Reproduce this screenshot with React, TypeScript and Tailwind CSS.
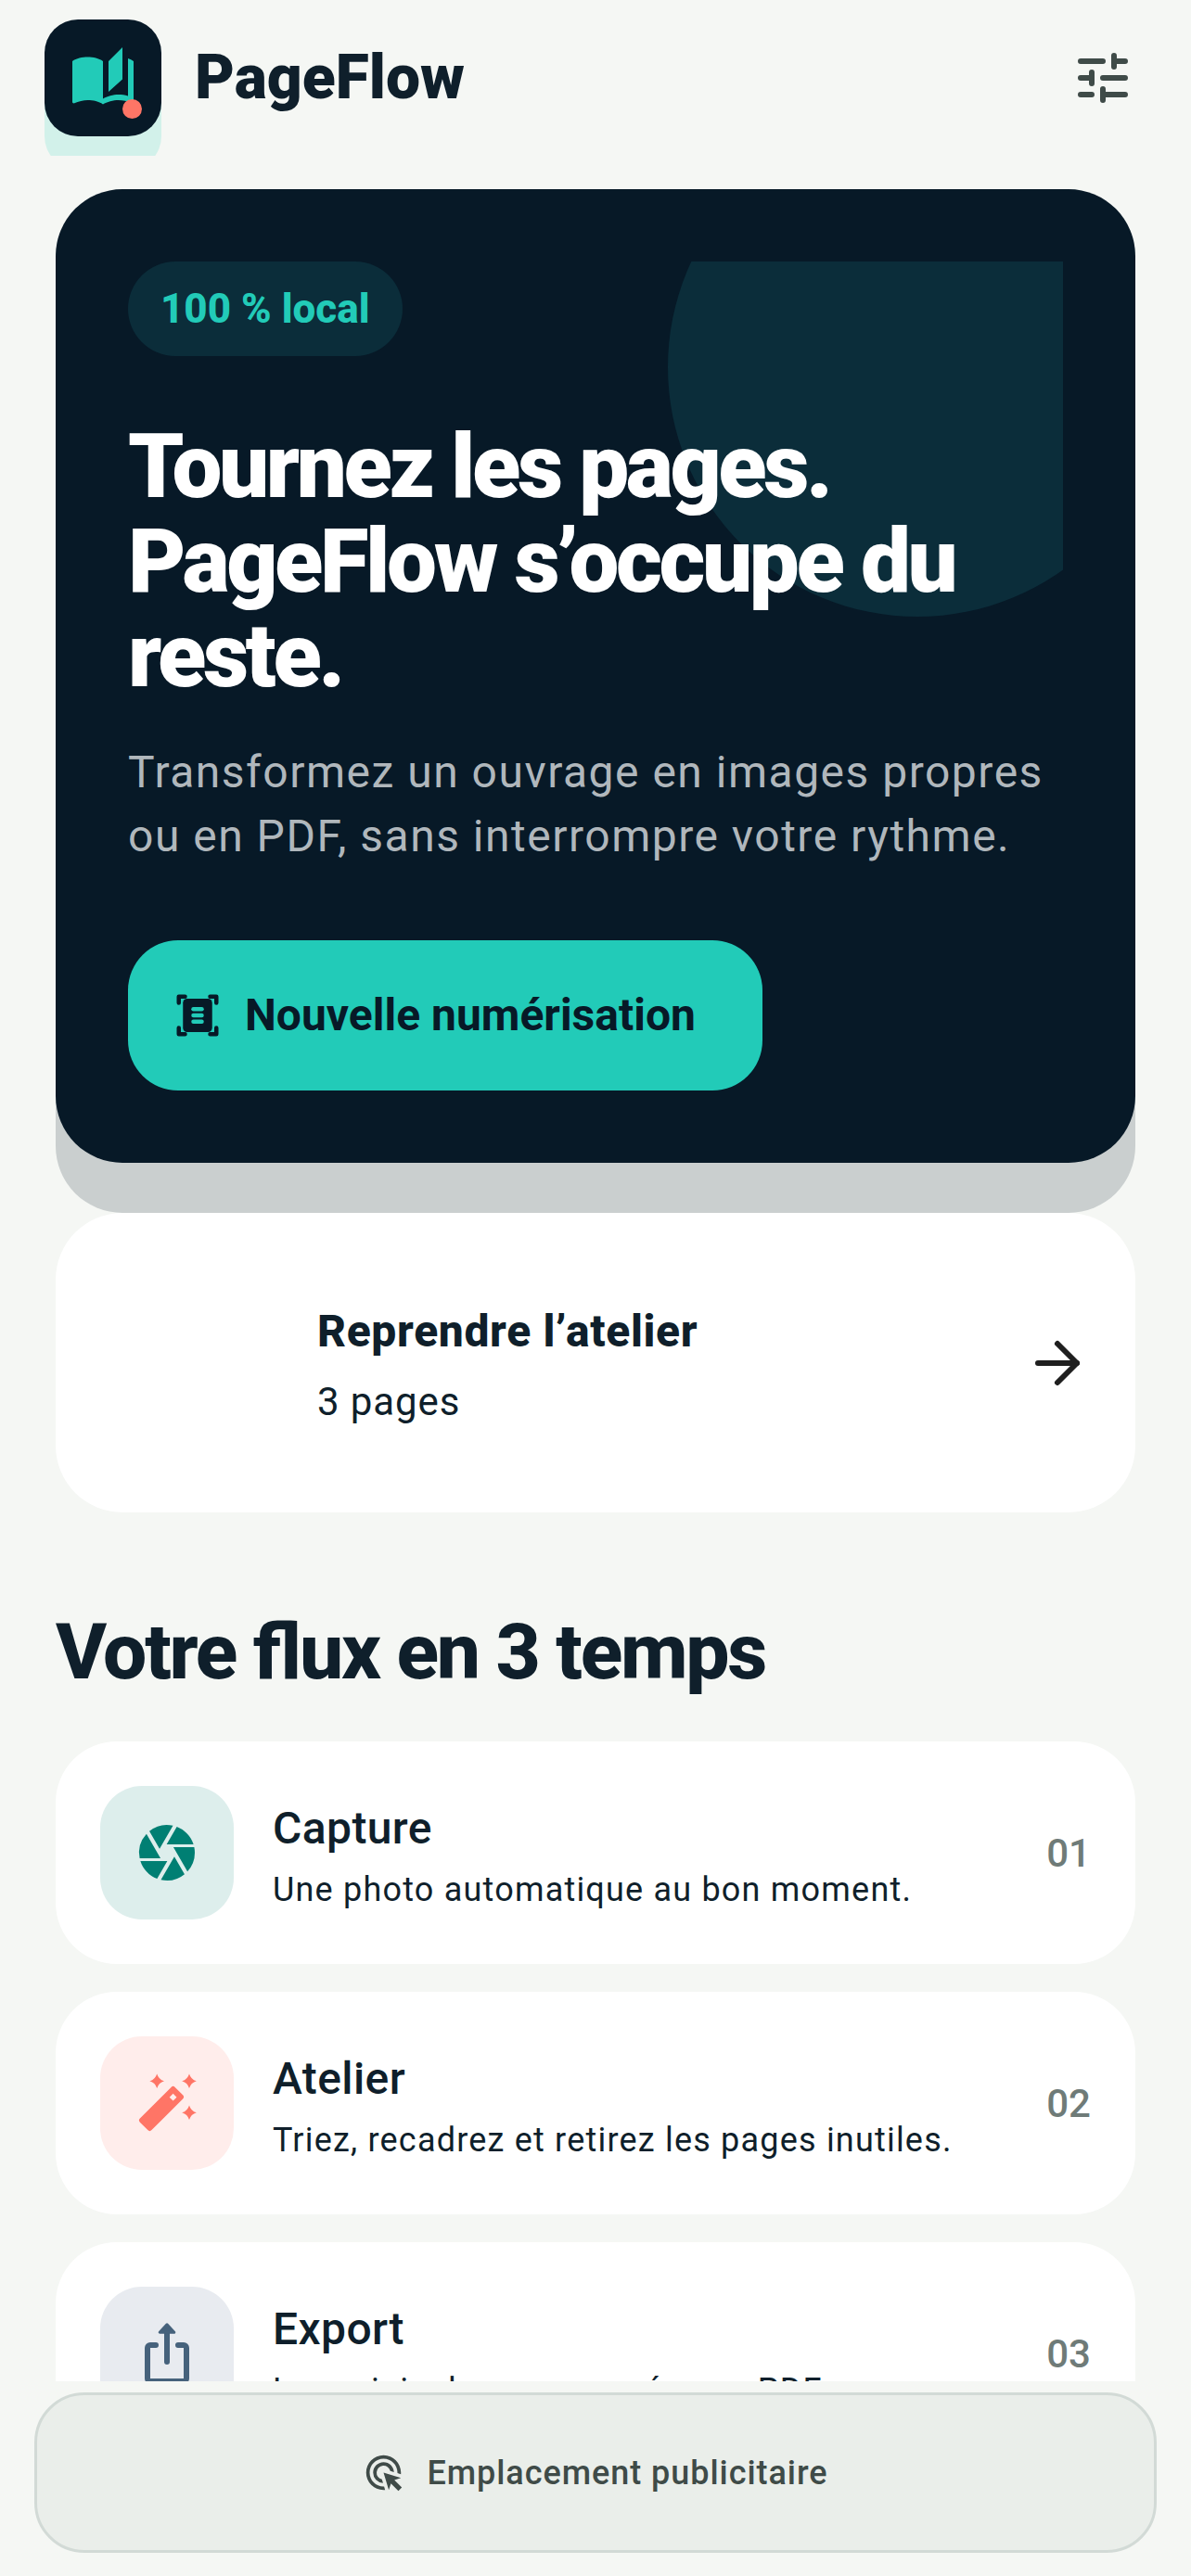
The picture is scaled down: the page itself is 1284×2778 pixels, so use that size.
import { ArrowRight } from 'lucide-react'
import { MdAdsClick, MdAutoStories, MdCamera } from 'react-icons/md'

function TuneIcon() {
  return (
    <svg width="72" height="72" viewBox="0 0 24 24" fill="none" stroke="#3f4b48" strokeWidth="2" strokeLinecap="round">
      <path d="M4 6h8M16 4v4M16 6h4M4 12h4M8 10v4M12 12h8M4 18h4M12 16v4M12 18h8" />
    </svg>
  )
}

function ScanIcon() {
  return (
    <svg width="54" height="54" viewBox="0 0 24 24" className="shrink-0">
      <path d="M6 3H3v3M18 3h3v3M6 21H3v-3M18 21h3v-3" fill="none" stroke="#071927" strokeWidth="2" strokeLinecap="round" strokeLinejoin="round" />
      <rect x="5" y="4" width="14" height="16" rx="2" fill="#071927" />
      <rect x="9" y="8" width="6" height="2" rx="1" fill="#22cbb8" />
      <rect x="9" y="11" width="6" height="2" rx="1" fill="#22cbb8" />
      <rect x="9" y="14" width="6" height="2" rx="1" fill="#22cbb8" />
    </svg>
  )
}

function WandIcon() {
  const sparkle = 'm0-2.6q.6 2 2.6 2.6q-2 .6-2.6 2.6q-.6-2-2.6-2.6q2-.6 2.6-2.6z'
  return (
    <svg width="72" height="72" viewBox="0 0 24 24" fill="#ff7566">
      <path d={`M8.4 4.1${sparkle}M20 4.1${sparkle}M20 15.4${sparkle}`} />
      <path
        fillRule="evenodd"
        d="M13.5 6.3a1 1 0 0 1 1.4 0l2.8 2.8a1 1 0 0 1 0 1.4L6.5 21.7a1 1 0 0 1-1.4 0l-2.8-2.8a1 1 0 0 1 0-1.4zM14.2 8.6l-1.3 1.3 1.3 1.3 1.3-1.3z"
      />
    </svg>
  )
}

function ShareIcon() {
  return (
    <svg width="72" height="72" viewBox="0 0 24 24" fill="none" stroke="#46627c" strokeWidth="2" strokeLinecap="round" strokeLinejoin="round">
      <path d="M8 9H6a1 1 0 0 0-1 1v11a1 1 0 0 0 1 1h12a1 1 0 0 0 1-1V10a1 1 0 0 0-1-1h-2M12 4v11" />
      <path d="M12 1.6 9.4 4.4h5.2z" fill="#46627c" strokeWidth="1" />
    </svg>
  )
}

const steps = [
  { icon: <MdCamera size={72} color="#007f73" />, tile: 'bg-[#ddeeec]', title: 'Capture', desc: 'Une photo automatique au bon moment.', num: '01' },
  { icon: <WandIcon />, tile: 'bg-[#ffedeb]', title: 'Atelier', desc: 'Triez, recadrez et retirez les pages inutiles.', num: '02' },
  { icon: <ShareIcon />, tile: 'bg-[#e8ebf0]', title: 'Export', desc: 'Les originales ou groupées en PDF.', num: '03' },
]

export default function App() {
  return (
    <div className="h-[2778px] flex flex-col bg-[#f5f7f4] text-[#0f1f2b] [font-family:Roboto,sans-serif] overflow-hidden">
      <header className="h-[168px] shrink-0 overflow-hidden pl-12 pr-[59px] pt-[21px]">
        <div className="flex items-center justify-between h-[126px]">
          <div className="flex items-center gap-9">
            <div className="relative w-[126px] h-[126px] rounded-[36px] bg-[#071927] shadow-[0_36px_0_#d2f1ea] flex items-center justify-center">
              <MdAutoStories size={72} color="#22cbb8" />
              <div className="absolute left-[84px] top-[86px] w-[21px] h-[21px] rounded-full bg-[#ff7566]" />
            </div>
            <span className="text-[66px] leading-none font-black">PageFlow</span>
          </div>
          <TuneIcon />
        </div>
      </header>

      <main className="flex-1 min-h-0 overflow-hidden px-[60px] pt-9">
        <section className="relative rounded-[72px] bg-[#071927] p-[78px] shadow-[0_54px_0_#cacfcf]">
          <div className="absolute left-[78px] right-[78px] top-[78px] bottom-[78px] overflow-hidden">
            <div className="absolute left-[582px] -top-[155px] w-[538px] h-[538px] rounded-full bg-[#0b2d3a]" />
          </div>
          <div className="relative">
            <div className="w-fit h-[102px] flex items-center px-[35px] rounded-full bg-[#0b2d3a] text-[#22cbb8] text-[44px] font-extrabold">
              100 % local
            </div>
            <h1 className="mt-[68px] text-[96px] leading-[102px] font-black tracking-[-3.4px] text-white">
              Tournez les pages. PageFlow s’occupe du reste.
            </h1>
            <p className="mt-10 text-[48px] leading-[69px] tracking-[1.5px] text-[#b0b7bc]">
              Transformez un ouvrage en images propres ou en PDF, sans interrompre votre rythme.
            </p>
            <button className="mt-[78px] h-[162px] w-fit flex items-center gap-6 pl-12 pr-[72px] rounded-[54px] bg-[#22cbb8] text-[#071927] text-[48px] font-bold">
              <ScanIcon />
              Nouvelle numérisation
            </button>
          </div>
        </section>

        <section className="mt-[54px] h-[323px] rounded-[72px] bg-white px-12 flex items-center gap-[42px] relative">
          <div className="w-[192px] shrink-0" />
          <div className="flex-1 pt-[7px]">
            <div className="text-[48px] leading-[60px] font-extrabold tracking-[0.65px]">Reprendre l’atelier</div>
            <div className="mt-[18px] text-[42px] leading-[56px] tracking-[0.9px]">3 pages</div>
          </div>
          <ArrowRight size={72} strokeWidth={2} color="#1f1f1f" />
        </section>

        <h2 className="mt-[106px] mb-[51px] text-[84px] leading-[90px] font-extrabold tracking-[-2.25px] [font-feature-settings:'liga']">Votre flux en 3 temps</h2>

        <div className="flex flex-col gap-[30px]">
          {steps.map((s) => (
            <div key={s.num} className="h-[240px] shrink-0 rounded-[66px] bg-white px-12 flex items-center">
              <div className={`w-[144px] h-[144px] rounded-[45px] shrink-0 flex items-center justify-center ${s.tile}`}>{s.icon}</div>
              <div className="flex-1 ml-[42px] pt-[7px]">
                <div className="text-[48px] leading-[60px] font-medium tracking-[0.4px]">{s.title}</div>
                <div className="mt-3 text-[36px] leading-[48px] tracking-[1.2px]">{s.desc}</div>
              </div>
              <span className="text-[42px] font-medium text-[#6f7b78]">{s.num}</span>
            </div>
          ))}
        </div>
      </main>

      <footer className="h-[210px] shrink-0 px-[37px] pt-3 pb-[25px]">
        <div className="h-full rounded-[54px] border-[3px] border-[#d2dad6] bg-[#eaeeea] flex items-center justify-center gap-6">
          <MdAdsClick size={45} color="#3f4b48" />
          <span className="text-[36px] font-medium tracking-[0.95px] text-[#3f4b48]">Emplacement publicitaire</span>
        </div>
      </footer>
    </div>
  )
}
